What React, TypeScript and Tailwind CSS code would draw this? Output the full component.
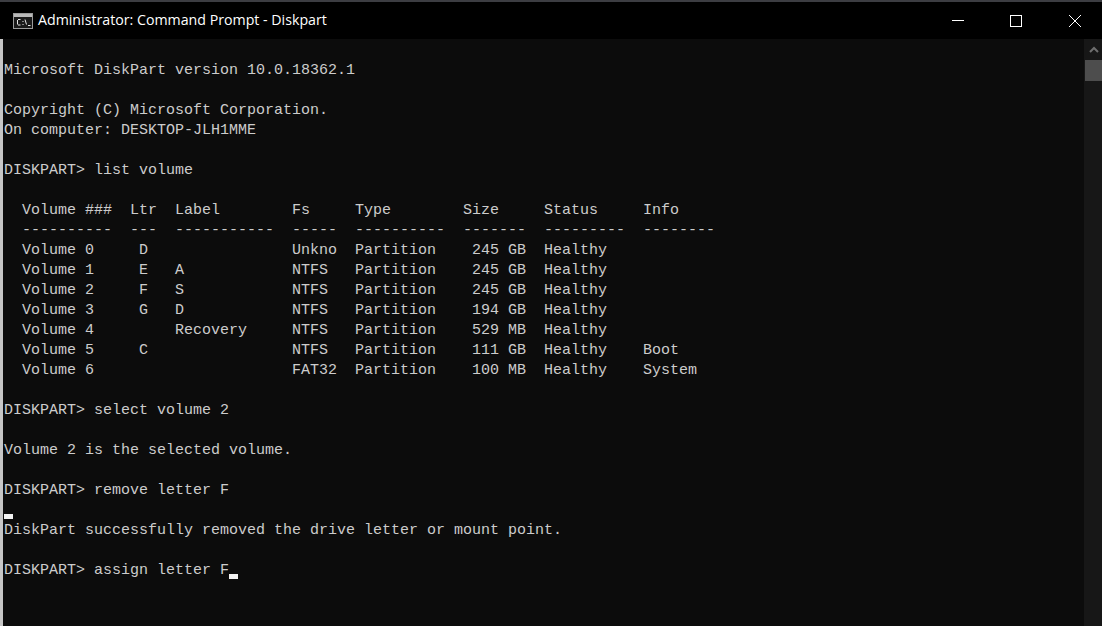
const lines = [
  "",
  "Microsoft DiskPart version 10.0.18362.1",
  "",
  "Copyright (C) Microsoft Corporation.",
  "On computer: DESKTOP-JLH1MME",
  "",
  "DISKPART> list volume",
  "",
  "  Volume ###  Ltr  Label        Fs     Type        Size     Status     Info",
  "  ----------  ---  -----------  -----  ----------  -------  ---------  --------",
  "  Volume 0     D                Unkno  Partition    245 GB  Healthy",
  "  Volume 1     E   A            NTFS   Partition    245 GB  Healthy",
  "  Volume 2     F   S            NTFS   Partition    245 GB  Healthy",
  "  Volume 3     G   D            NTFS   Partition    194 GB  Healthy",
  "  Volume 4         Recovery     NTFS   Partition    529 MB  Healthy",
  "  Volume 5     C                NTFS   Partition    111 GB  Healthy    Boot",
  "  Volume 6                      FAT32  Partition    100 MB  Healthy    System",
  "",
  "DISKPART> select volume 2",
  "",
  "Volume 2 is the selected volume.",
  "",
  "DISKPART> remove letter F",
  "",
  "DiskPart successfully removed the drive letter or mount point.",
  "",
  "DISKPART> assign letter F",
]

function Cursor() {
  return <span className="absolute left-0 top-[13px] h-[5px] w-[9px] bg-[#f2f2f2]" />
}

function ConsoleIcon() {
  return (
    <svg width="20" height="16" viewBox="0 0 20 16" className="shrink-0">
      <rect x="0.5" y="0.5" width="19" height="15" fill="#1a1a1a" stroke="#9a9a9a" />
      <rect x="1" y="1" width="18" height="3" fill="#b9b9b9" />
      <path d="M5 6.5H7.5M4.5 7V11.5M5 12H7.5M10 8V9M10 11V12M12 6.5L13.5 11.5M15 12.5H17.5" stroke="#e6e6e6" strokeWidth="1" fill="none" />
    </svg>
  )
}

export default function App() {
  return (
    <div className="flex h-[626px] w-[1102px] flex-col overflow-hidden bg-black">
      <div className="h-[2px] shrink-0 bg-[#3c3d42]" />

      {/* Title bar */}
      <div className="flex h-[37px] shrink-0 items-center bg-black pl-[13px]">
        <ConsoleIcon />
        <span className="ml-[5px] font-['Open_Sans','Liberation_Sans',sans-serif] text-[14.2px] leading-none text-white">
          Administrator: Command Prompt - Diskpart
        </span>
        <div className="ml-auto flex items-center gap-[46px] pr-[21px]">
          <div className="h-px w-[12px] bg-white" />
          <div className="mr-px h-[12px] w-[12px] border border-white" />
          <svg width="12" height="12" viewBox="0 0 12 12">
            <path d="M0 0L12 12M12 0L0 12" stroke="#fff" strokeWidth="1" fill="none" />
          </svg>
        </div>
      </div>

      <div className="flex min-h-0 flex-1">
        <div className="w-[3px] shrink-0 bg-[#c6c6c6]" />

        {/* Console output */}
        <div className="min-w-0 flex-1 bg-[#0c0c0c] pl-px pt-[2px] font-['Liberation_Mono',monospace] text-[15px] leading-[20px] text-[#cccccc]">
          {lines.map((line, i) => (
            <div key={i} className="relative h-[20px] whitespace-pre">
              {line}
              {i === 26 && (
                <span className="relative inline-block h-[20px] w-[9px] align-top">
                  <Cursor />
                </span>
              )}
              {i === 23 && <Cursor />}
            </div>
          ))}
        </div>

        {/* Scrollbar */}
        <div className="flex w-[18px] shrink-0 flex-col bg-[#171717]">
          <div className="flex h-[21px] items-center justify-center pl-[2px]">
            <svg width="10" height="7" viewBox="0 0 10 7">
              <path d="M1 6L5 2L9 6" stroke="#6e6e6e" strokeWidth="2" fill="none" />
            </svg>
          </div>
          <div className="ml-[1px] h-[21px] bg-[#4d4d4d]" />
        </div>
      </div>
    </div>
  )
}
